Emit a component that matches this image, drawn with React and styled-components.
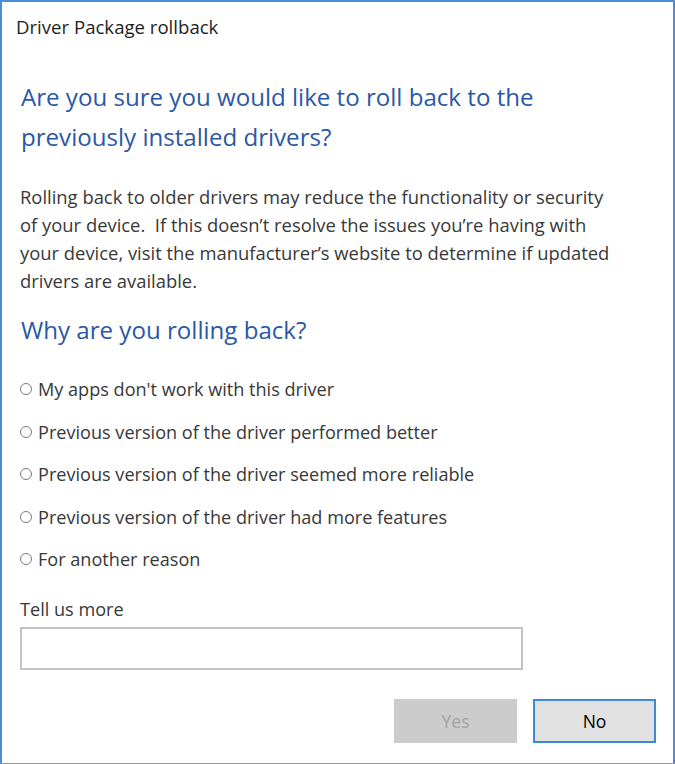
import React, { useState } from "react";
import styled, { createGlobalStyle } from "styled-components";

const GlobalStyle = createGlobalStyle`
  html, body {
    margin: 0;
    padding: 0;
    background: #ffffff;
  }
  body {
    font-family: "Open Sans", "Noto Sans", "Liberation Sans", sans-serif;
  }
`;

const reasons = [
  "My apps don't work with this driver",
  "Previous version of the driver performed better",
  "Previous version of the driver seemed more reliable",
  "Previous version of the driver had more features",
  "For another reason",
];

const App = () => {
  const [reason, setReason] = useState(null);
  const [more, setMore] = useState("");

  return (
    <>
      <GlobalStyle />
      <Window>
        <TitleBar>Driver Package rollback</TitleBar>
        <Body>
          <Heading>
            Are you sure you would like to roll back to the
            <br />
            previously installed drivers?
          </Heading>
          <Paragraph>
            Rolling back to older drivers may reduce the functionality or security
            <br />
            of your device.&nbsp; If this doesn’t resolve the issues you’re having with
            <br />
            your device, visit the manufacturer’s website to determine if updated
            <br />
            drivers are available.
          </Paragraph>
          <SubHeading>Why are you rolling back?</SubHeading>
          <RadioList>
            {reasons.map((r, i) => (
              <RadioRow key={i} onClick={() => setReason(i)}>
                <RadioDot $checked={reason === i} />
                <span>{r}</span>
              </RadioRow>
            ))}
          </RadioList>
          <Label>Tell us more</Label>
          <TextBox value={more} onChange={(e) => setMore(e.target.value)} />
          <ButtonRow>
            <Button disabled={reason === null}>Yes</Button>
            <Button $primary>No</Button>
          </ButtonRow>
        </Body>
      </Window>
    </>
  );
};

const Window = styled.div`
  box-sizing: border-box;
  width: 675px;
  height: 764px;
  border-top: 2px solid #4a8fd6;
  border-left: 2px solid #4a8fd6;
  border-right: 2px solid #4a8fd6;
  border-bottom: 1px solid #9a9a9a;
  background: #ffffff;
  overflow: hidden;
`;

const TitleBar = styled.div`
  padding: 13px 0 0 14px;
  height: 24px;
  line-height: 24px;
  font-size: 18.6px;
  color: #1e1e1e;
`;

const Body = styled.div`
  padding: 0 0 0 18px;
`;

const Heading = styled.h1`
  margin: 38px 0 0 1px;
  font-size: 24.1px;
  font-weight: 400;
  line-height: 40px;
  color: #2a58a6;
`;

const Paragraph = styled.p`
  margin: 26px 0 0 0;
  font-size: 18.4px;
  line-height: 28px;
  color: #383838;
`;

const SubHeading = styled.h2`
  margin: 15px 0 0 1px;
  font-size: 24.1px;
  font-weight: 400;
  line-height: 40px;
  color: #2a58a6;
`;

const RadioList = styled.div`
  margin-top: 18px;
  display: flex;
  flex-direction: column;
`;

const RadioRow = styled.label`
  display: flex;
  align-items: center;
  gap: 6px;
  height: 42.5px;
  font-size: 18.1px;
  color: #383838;
  cursor: default;
`;

const RadioDot = styled.span`
  box-sizing: border-box;
  width: 12px;
  height: 12px;
  border-radius: 50%;
  border: 1px solid #7a7a7a;
  background: ${(p) => (p.$checked ? "radial-gradient(circle, #333 0 3px, #fff 3.5px)" : "#fff")};
  flex: none;
`;

const Label = styled.div`
  margin-top: 16px;
  height: 24px;
  line-height: 24px;
  font-size: 18.1px;
  color: #383838;
`;

const TextBox = styled.input`
  display: block;
  box-sizing: border-box;
  margin-top: 6px;
  width: 503px;
  height: 43px;
  border: 2px solid #c3c3c3;
  outline: none;
  font-size: 16px;
  font-family: inherit;
  padding: 0 8px;
`;

const ButtonRow = styled.div`
  margin-top: 29px;
  display: flex;
  justify-content: flex-end;
  gap: 16px;
  padding-right: 17px;
`;

const Button = styled.button`
  box-sizing: border-box;
  width: 123px;
  height: 44px;
  font-family: inherit;
  font-size: 17.5px;
  color: ${(p) => (p.disabled ? "#a3a3a3" : "#000")};
  background: ${(p) => (p.disabled ? "#cccccc" : "#e1e1e1")};
  border: 2px solid ${(p) => (p.$primary ? "#3a8ad8" : p.disabled ? "#cccccc" : "#adadad")};
  padding: 0;
`;

export default App;
